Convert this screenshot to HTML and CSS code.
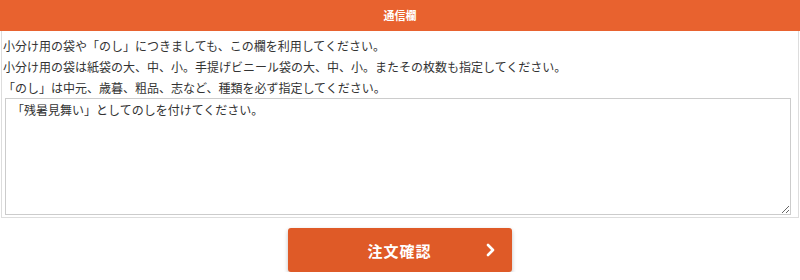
FILE: index.html
```html
<!DOCTYPE html>
<html lang="ja">
  <head>
    <meta charset="UTF-8" />
    <meta name="viewport" content="width=device-width, initial-scale=1.0" />
    <title>通信欄</title>
    <link rel="stylesheet" href="styles.css">
  </head>
  <body>
    <form action="" method="POST" class="order-form">
      <div class="box">
        <div class="box-head">通信欄</div>
        <div class="box-body">
          <p>小分け用の袋や「のし」につきましても、この欄を利用してください。</p>
          <p>小分け用の袋は紙袋の大、中、小。手提げビニール袋の大、中、小。またその枚数も指定してください。</p>
          <p>「のし」は中元、歳暮、粗品、志など、種類を必ず指定してください。</p>
          <textarea name="message" class="message">「残暑見舞い」としてのしを付けてください。</textarea>
        </div>
      </div>
      <div class="actions">
        <button class="btn-confirm" type="submit">
          <span>注文確認</span>
          <svg class="chevron" width="10" height="14" viewBox="0 0 10 14"><path d="M2 2 L7 7 L2 12" fill="none" stroke="#fff" stroke-width="2.6" stroke-linecap="round" stroke-linejoin="round"/></svg>
        </button>
      </div>
    </form>
  </body>
</html>
```

FILE: styles.css
```css
*, *:before, *:after {
  box-sizing: border-box;
}
body {
  margin: 0;
  background: #fff;
  color: #333;
  font-family: "Noto Sans CJK JP", "Noto Sans", sans-serif;
  font-size: 12px;
}
.box {
  margin: 0 1px;
  border: 1px solid #ddd;
  border-top: none;
}
.box-head {
  height: 31px;
  margin: 0 -2px 0 -2px;
  background: #e8622f;
  color: #fff;
  font-size: 11px;
  font-weight: bold;
  line-height: 31px;
  text-align: center;
}
.box-body {
  padding: 4px 9px 2px 1px;
}
.box-body p {
  margin: 0;
  line-height: 21px;
}
.message {
  display: block;
  width: 786px;
  height: 117px;
  margin: 0 0 0 2px;
  padding: 3px 6px;
  border: 1px solid #ccc;
  color: #333;
  font-family: "Noto Sans CJK JP", "Noto Sans", sans-serif;
  font-size: 12px;
  line-height: 16px;
  resize: vertical;
}
.actions {
  display: flex;
  justify-content: center;
  margin-top: 10px;
}
.btn-confirm {
  position: relative;
  display: flex;
  align-items: center;
  justify-content: center;
  width: 224px;
  height: 44px;
  margin-left: -1px;
  border: none;
  border-radius: 3px;
  background: #df5a27;
  color: #fff;
  font-family: "Noto Sans CJK JP", "Noto Sans", sans-serif;
  font-size: 15px;
  font-weight: bold;
  letter-spacing: 1px;
  box-shadow: 0 2px 4px rgba(0, 0, 0, .25);
  cursor: pointer;
}
.chevron {
  position: absolute;
  right: 16px;
  top: 15px;
}
```
